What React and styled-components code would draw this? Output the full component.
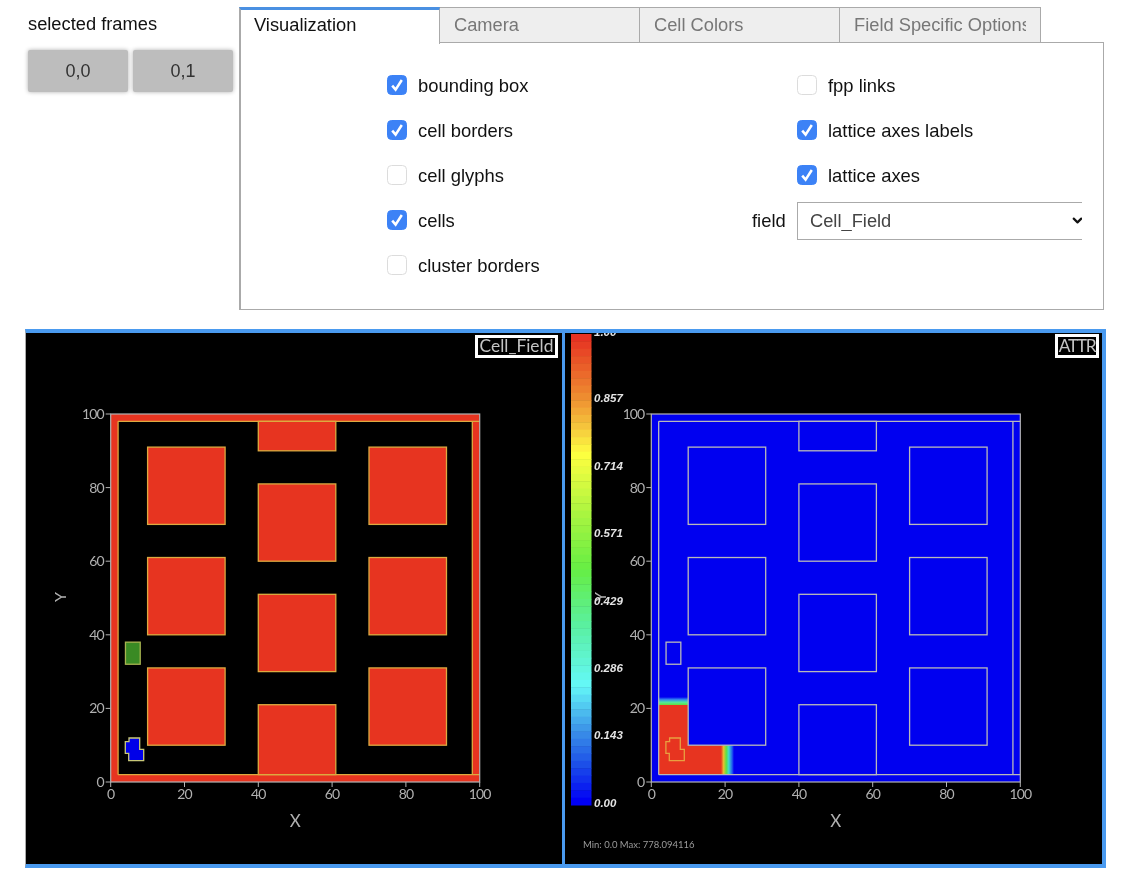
import React from 'react';
import styled, { createGlobalStyle } from 'styled-components';
import { ChevronDown } from 'lucide-react';

const Global = createGlobalStyle`
  html, body { margin: 0; padding: 0; background: #fff; }
  body { font-family: "Liberation Sans", Arial, sans-serif; }
`;

const Page = styled.div`
  width: 1122px;
  height: 884px;
  overflow: hidden;
  padding-top: 7px;
  box-sizing: border-box;
  filter: blur(0.35px);
`;
const Top = styled.div`
  display: flex;
  height: 322px;
`;
const Sidebar = styled.aside`
  width: 211px;
  padding-left: 28px;
`;
const SideTitle = styled.div`
  font-size: 18.3px;
  line-height: 20px;
  margin-top: 7px;
  color: #111;
`;
const FrameRow = styled.div`
  display: flex;
  gap: 5px;
  margin-top: 16px;
`;
const FrameButton = styled.button`
  width: 100px;
  height: 42px;
  padding: 0;
  border: 0;
  border-radius: 2px;
  background: #bdbdbd;
  box-shadow: 0 0 4px #b0b0b0;
  color: #333;
  font: 18px "Liberation Sans", Arial, sans-serif;
`;
const TabsArea = styled.div`
  width: 865px;
`;
const TabBar = styled.div`
  display: flex;
  height: 35px;
  position: relative;
  z-index: 1;
`;
const Tab = styled.div`
  width: ${p => p.$w}px;
  height: ${p => (p.$active ? 37 : 35.5)}px;
  box-sizing: border-box;
  padding: ${p => (p.$active ? '5px 14px 0 13px' : '6.5px 14px 0')};
  font-size: 18.3px;
  line-height: 20px;
  background: ${p => (p.$active ? '#fff' : '#eee')};
  color: ${p => (p.$active ? '#111' : '#777')};
  border: 1.5px solid #aaa;
  border-left-width: ${p => (p.$active ? 2 : 0)}px;
  border-top: ${p => (p.$active ? '3px solid #4a90e2' : '1.5px solid #aaa')};
  border-bottom-width: ${p => (p.$active ? 0 : 1.5)}px;
`;
const TabLabel = styled.div`
  overflow: hidden;
  white-space: nowrap;
`;
const TabPanel = styled.div`
  box-sizing: border-box;
  height: 268px;
  border: 1.5px solid #aaa;
  border-left-width: 2px;
  padding: 20.5px 0 0 146px;
  display: flex;
`;
const LeftColumn = styled.div`
  width: 365px;
`;
const RightColumn = styled.div`
  width: 330px;
`;
const CheckRow = styled.label`
  display: flex;
  align-items: center;
  height: 45px;
  gap: 11px;
  font-size: 18.4px;
  color: #111;
  padding-left: ${p => (p.$indent ? 45 : 0)}px;
`;
const Box = styled.span`
  width: 20px;
  height: 20px;
  margin-top: -2px;
  box-sizing: border-box;
  border-radius: 4.5px;
  display: flex;
  align-items: center;
  justify-content: center;
  background: ${p => (p.$on ? '#3c82f6' : '#fff')};
  border: 1px solid ${p => (p.$on ? '#3c82f6' : '#dcdcdc')};
`;
const CheckMark = styled.svg`
  width: 18px;
  height: 18px;
  display: block;
`;
const FieldRow = styled.div`
  display: flex;
  align-items: center;
  height: 38px;
  margin-top: 3px;
  font-size: 18.4px;
  color: #111;
`;
const FieldLabel = styled.span`
  width: 45px;
`;
const SelectWrap = styled.div`
  position: relative;
  width: 285px;
  height: 38px;
  overflow: hidden;
`;
const Select = styled.select`
  appearance: none;
  width: 300px;
  height: 38px;
  box-sizing: border-box;
  border: 1.5px solid #aaa;
  border-radius: 0;
  padding: 0 0 0 12px;
  background: #fff;
  color: #444;
  font: 18.3px "Liberation Sans", Arial, sans-serif;
`;
const Chevron = styled(ChevronDown)`
  position: absolute;
  right: -3px;
  top: 11px;
  color: #111;
`;

const Viewers = styled.section`
  display: flex;
  margin-left: 25px;
  width: 1081px;
`;
const Pane = styled.div`
  box-sizing: border-box;
  width: ${p => p.$w}px;
  height: 539px;
  background: #000;
  border-top: 4px solid #4a9aef;
  border-bottom: 4px solid #4a9aef;
  border-left: ${p => p.$bl};
  border-right: ${p => p.$br};
  overflow: hidden;
`;
const PlotSvg = styled.svg`
  display: block;
  width: 100%;
  height: 531px;
`;
const BadgeText = styled.text`
  font-family: Lato, sans-serif;
  font-size: 17.4px;
  letter-spacing: ${p => p.$spacing || 0}px;
  fill: #c4c4c4;
`;
const AxisText = styled.text`
  font-family: Lato, "Open Sans", sans-serif;
  font-size: ${p => p.$size || 14}px;
  letter-spacing: ${p => p.$spacing ?? -0.9}px;
  fill: #b0b0b0;
`;
const BarLabel = styled.text`
  font-family: "Liberation Sans", Arial, sans-serif;
  font-style: italic;
  font-weight: bold;
  font-size: 11.5px;
  fill: #e4e4e4;
`;
const MinMax = styled.text`
  font-family: Lato, "Open Sans", sans-serif;
  font-size: 9.5px;
  fill: #9a9a9a;
`;

const col = ['bounding box', 'cell borders', 'cell glyphs', 'cells', 'cluster borders'];
const colOn = [true, true, false, true, false];
const rightRows = [['fpp links', false], ['lattice axes labels', true], ['lattice axes', true]];

const TICKS = [0, 20, 40, 60, 80, 100];
const Y0 = 782, SY = 3.68, SX = 3.69;
const squares = [
  [10, 70, 31, 91], [10, 40, 31, 61], [10, 10, 31, 31],
  [40, 90, 61, 98], [40, 60, 61, 81], [40, 30, 61, 51], [40, 2, 61, 21],
  [70, 70, 91, 91], [70, 40, 91, 61], [70, 10, 91, 31],
];

function Cb({ on }) {
  return (
    <Box $on={on}>
      {on && (
        <CheckMark viewBox="0 0 18 18">
          <path d="M4.2 9.6 L7.6 13.6 L13.8 4" fill="none" stroke="#fff" strokeWidth="2.5" />
        </CheckMark>
      )}
    </Box>
  );
}

function CanvasBadge({ x, y, w, h, spacing, children }) {
  return (
    <g>
      <rect x={x + 1.5} y={y + 1.5} width={w - 3} height={h - 3} fill="#000" stroke="#fff" strokeWidth="3" />
      <BadgeText x={x + w / 2} y={352} textAnchor="middle" $spacing={spacing}>{children}</BadgeText>
    </g>
  );
}

function Plot({ x0, attr }) {
  const px = v => x0 + v * SX;
  const py = v => Y0 - v * SY;
  const line = attr ? '#b9b9b9' : '#dcaa40';
  const fill = attr ? '#0000f0' : '#e73420';
  const d = x0 - 110.7;
  const rect = (a, b, c, e, key) => (
    <rect key={key} x={px(a)} y={py(e)} width={(c - a) * SX} height={(e - b) * SY}
      fill={fill} stroke={line} strokeWidth="1.3" />
  );
  return (
    <g>
      <rect x={px(0)} y={py(100)} width={100 * SX} height={100 * SY} fill={fill} />
      {!attr && <rect x={px(2)} y={py(98)} width={96 * SX} height={96 * SY} fill="#000" />}
      {attr && (
        <>
          <rect x={659} y={697} width={29} height={8} fill="url(#gradTop)" />
          <rect x={659} y={705} width={29} height={70} fill="#e73420" />
          <rect x={688} y={745} width={33} height={30} fill="#e73420" />
          <rect x={721} y={745} width={13} height={30} fill="url(#gradRight)" />
        </>
      )}
      {squares.map((s, i) => rect(s[0], s[1], s[2], s[3], i))}
      <path d={`M${px(2)} ${py(2)}V${py(98)}M${px(2)} ${py(98)}H${px(100)}M${px(98)} ${py(98)}V${py(2)}M${px(2)} ${py(2)}H${px(100)}`}
        fill="none" stroke={line} strokeWidth="1.3" />
      <rect x={px(4)} y={py(38)} width={4 * SX} height={6 * SY}
        fill={attr ? 'none' : '#3a8a24'} stroke={attr ? line : '#a8b450'} strokeWidth="1.3" />
      <polygon
        points={[[129, 738], [139.7, 738], [139.7, 749.3], [143.7, 749.3], [143.7, 760.7], [128.7, 760.7], [128.7, 753.3], [125.3, 753.3], [125.3, 741.7], [129, 741.7]]
          .map(([a, b]) => `${a + d},${b}`).join(' ')}
        fill={attr ? 'none' : '#0000e8'}
        stroke={attr ? '#e8a040' : '#c8c878'}
        strokeWidth="1.3"
      />
      <rect x={px(0)} y={py(100)} width={100 * SX} height={100 * SY} fill="none" stroke="#b4b4b4" strokeWidth="1.2" />
      {TICKS.map(t => (
        <g key={t}>
          <path d={`M${px(t)} ${Y0}v5M${px(0) - 5} ${py(t)}h5`} stroke="#b4b4b4" strokeWidth="1" />
          <AxisText x={px(t)} y={799} textAnchor="middle">{t}</AxisText>
          <AxisText x={px(0) - 7} y={py(t) + 5} textAnchor="end">{t}</AxisText>
        </g>
      ))}
      <AxisText x={px(50)} y={827} textAnchor="middle" $size={17} $spacing={0}>X</AxisText>
      <AxisText x={x0 - 45} y={597} textAnchor="middle" $size={16} $spacing={0} transform={`rotate(-90 ${x0 - 45} 597)`}>Y</AxisText>
    </g>
  );
}

const STOPS = [
  [0, [230, 50, 34]], [0.125, [238, 138, 48]], [0.2, [246, 205, 62]], [0.25, [255, 255, 64]],
  [0.38, [170, 245, 64]], [0.5, [102, 238, 68]], [0.62, [90, 240, 160]], [0.75, [100, 248, 248]],
  [0.85, [58, 144, 232]], [0.92, [28, 80, 232]], [1, [0, 0, 245]],
];
const colorAt = t => {
  let i = 0;
  while (i < STOPS.length - 2 && t > STOPS[i + 1][0]) i++;
  const [a, ca] = STOPS[i];
  const [b, cb] = STOPS[i + 1];
  const f = (t - a) / (b - a);
  return `rgb(${ca.map((v, k) => Math.round(v + (cb[k] - v) * f)).join(',')})`;
};
const N = 64;
const bands = Array.from({ length: N }, (_, i) => colorAt(i / (N - 1)));
const barTop = 334, barH = 471;
const barLabels = [
  ['1.00', 336], ['0.857', 402], ['0.714', 470], ['0.571', 537],
  ['0.429', 605], ['0.286', 672], ['0.143', 739], ['0.00', 807],
];

function Defs() {
  return (
    <defs>
      <linearGradient id="gradTop" x1="0" y1="1" x2="0" y2="0">
        <stop offset="0" stopColor="#60e040" />
        <stop offset="0.35" stopColor="#50e8a0" />
        <stop offset="0.7" stopColor="#3080f0" />
        <stop offset="1" stopColor="#0000f0" />
      </linearGradient>
      <linearGradient id="gradRight" x1="0" y1="0" x2="1" y2="0">
        <stop offset="0" stopColor="#e73420" />
        <stop offset="0.2" stopColor="#e8c030" />
        <stop offset="0.4" stopColor="#60e040" />
        <stop offset="0.6" stopColor="#40d8d0" />
        <stop offset="0.85" stopColor="#2060f0" />
        <stop offset="1" stopColor="#0000f0" />
      </linearGradient>
    </defs>
  );
}

export default function App() {
  return (
    <Page>
      <Global />
      <Top>
        <Sidebar>
          <SideTitle>selected frames</SideTitle>
          <FrameRow>
            <FrameButton>0,0</FrameButton>
            <FrameButton>0,1</FrameButton>
          </FrameRow>
        </Sidebar>
        <TabsArea>
          <TabBar>
            <Tab $active $w={201}><TabLabel>Visualization</TabLabel></Tab>
            <Tab $w={200}><TabLabel>Camera</TabLabel></Tab>
            <Tab $w={200}><TabLabel>Cell Colors</TabLabel></Tab>
            <Tab $w={201}><TabLabel>Field Specific Options</TabLabel></Tab>
          </TabBar>
          <TabPanel>
            <LeftColumn>
              {col.map((t, i) => (
                <CheckRow key={t}><Cb on={colOn[i]} />{t}</CheckRow>
              ))}
            </LeftColumn>
            <RightColumn>
              {rightRows.map(([t, on]) => (
                <CheckRow key={t} $indent><Cb on={on} />{t}</CheckRow>
              ))}
              <FieldRow>
                <FieldLabel>field</FieldLabel>
                <SelectWrap>
                  <Select defaultValue="Cell_Field"><option>Cell_Field</option></Select>
                  <Chevron size={15} strokeWidth={3.4} />
                </SelectWrap>
              </FieldRow>
            </RightColumn>
          </TabPanel>
        </TabsArea>
      </Top>
      <Viewers>
        <Pane $w={540} $bl="1px solid #aaa" $br="3px solid #4a9aef">
          <PlotSvg viewBox="26 333 536 531">
            <Plot x0={110.7} />
            <CanvasBadge x={475} y={335} w={83} h={23}>Cell_Field</CanvasBadge>
          </PlotSvg>
        </Pane>
        <Pane $w={541} $bl="0" $br="4px solid #4a9aef">
          <PlotSvg viewBox="565 333 537 531">
            <Defs />
            <Plot x0={651.3} attr />
            {bands.map((c, i) => (
              <rect key={i} x={571} y={barTop + (i * barH) / N} width={20.5} height={barH / N + 0.5} fill={c} />
            ))}
            {barLabels.map(([t, y]) => (
              <BarLabel key={t} x={594} y={y}>{t}</BarLabel>
            ))}
            <MinMax x={583} y={848}>Min: 0.0 Max: 778.094116</MinMax>
            <CanvasBadge x={1055} y={334} w={44} h={24} spacing={-1.4}>ATTR</CanvasBadge>
          </PlotSvg>
        </Pane>
      </Viewers>
    </Page>
  );
}
